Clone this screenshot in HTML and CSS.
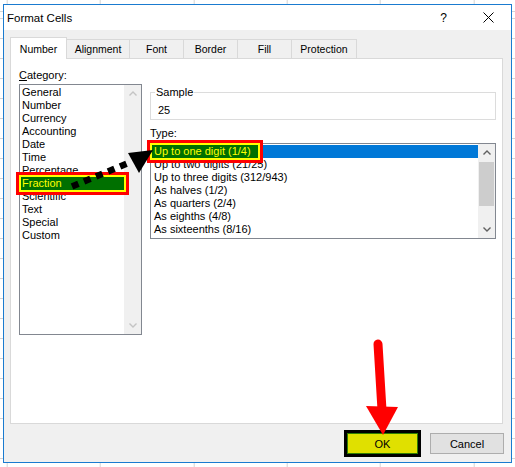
FILE: index.html
```html
<!DOCTYPE html>
<html>
<head>
<meta charset="utf-8">
<title>Format Cells</title>
<link rel="stylesheet" href="styles.css">
</head>
<body>
<div class="dialog">
  <div class="titlebar">
    <span class="title">Format Cells</span>
    <span class="help">?</span>
    <svg class="close" width="11" height="11" viewBox="0 0 11 11"><path d="M0.5 0.5L10.5 10.5M10.5 0.5L0.5 10.5" stroke="#000" stroke-width="1" fill="none"/></svg>
  </div>
  <div class="content">
    <div class="tabs">
      <div class="tab active t-number">Number</div>
      <div class="tab t-align">Alignment</div>
      <div class="tab t-small">Font</div>
      <div class="tab t-small">Border</div>
      <div class="tab t-small">Fill</div>
      <div class="tab t-prot">Protection</div>
    </div>
    <div class="panel">
      <div class="col-left">
        <div class="label cat-label"><u>C</u>ategory:</div>
        <div class="listbox cat">
          <div class="items">
            <div class="row">General</div>
            <div class="row">Number</div>
            <div class="row">Currency</div>
            <div class="row">Accounting</div>
            <div class="row">Date</div>
            <div class="row">Time</div>
            <div class="row">Percentage</div>
            <div class="row hl">Fraction</div>
            <div class="row">Scientific</div>
            <div class="row">Text</div>
            <div class="row">Special</div>
            <div class="row">Custom</div>
          </div>
          <div class="vscroll off">
            <div class="sb-btn"><svg width="8" height="5" viewBox="0 0 8 5"><path d="M0.5 4.5L4 1L7.5 4.5" stroke="currentColor" stroke-width="1.4" fill="none"/></svg></div>
            <div class="sb-track"></div>
            <div class="sb-btn"><svg width="8" height="5" viewBox="0 0 8 5"><path d="M0.5 0.5L4 4L7.5 0.5" stroke="currentColor" stroke-width="1.4" fill="none"/></svg></div>
          </div>
        </div>
      </div>
      <div class="col-right">
        <fieldset class="group">
          <legend>Sample</legend>
          <div class="sample-value">25</div>
        </fieldset>
        <div class="label type-label">Type:</div>
        <div class="listbox type">
          <div class="items">
            <div class="row sel"><span class="txt mark">Up to one digit (1/4)</span></div>
            <div class="row"><span class="txt">Up to two digits (21/25)</span></div>
            <div class="row"><span class="txt">Up to three digits (312/943)</span></div>
            <div class="row"><span class="txt">As halves (1/2)</span></div>
            <div class="row"><span class="txt">As quarters (2/4)</span></div>
            <div class="row"><span class="txt">As eighths (4/8)</span></div>
            <div class="row"><span class="txt">As sixteenths (8/16)</span></div>
          </div>
          <div class="vscroll">
            <div class="sb-btn"><svg width="8" height="5" viewBox="0 0 8 5"><path d="M0.5 4.5L4 1L7.5 4.5" stroke="currentColor" stroke-width="1.4" fill="none"/></svg></div>
            <div class="sb-track"><div class="thumb"></div></div>
            <div class="sb-btn"><svg width="8" height="5" viewBox="0 0 8 5"><path d="M0.5 0.5L4 4L7.5 0.5" stroke="currentColor" stroke-width="1.4" fill="none"/></svg></div>
          </div>
        </div>
      </div>
    </div>
    <div class="buttons">
      <button class="btn ok">OK</button>
      <button class="btn cancel">Cancel</button>
    </div>
  </div>
</div>
<svg class="annotations" width="515" height="467" viewBox="0 0 515 467">
  <line x1="72" y1="186.5" x2="131" y2="162" stroke="#000" stroke-width="6.5" stroke-dasharray="7 6"/>
  <polygon points="153,150 128,153 139,173" fill="#000"/>
  <line x1="378" y1="344" x2="382" y2="410" stroke="#f00" stroke-width="9" stroke-linecap="round"/>
  <polygon points="366,406 398,407 383,435" fill="#f00"/>
</svg>
</body>
</html>
```
FILE: styles.css
```css
html, body {
  margin: 0;
  padding: 0;
}
body {
  width: 515px;
  height: 467px;
  overflow: hidden;
  position: relative;
  font-family: "Liberation Sans", Arial, sans-serif;
  font-size: 11px;
  color: #000;
  background-color: #fff;
  background-image:
    repeating-linear-gradient(90deg, #d4d4d4 0 1px, transparent 1px 93.3px),
    repeating-linear-gradient(180deg, #d4d4d4 0 1px, transparent 1px 20px);
  background-position: 6.7px 0, 0 18px;
}
.dialog {
  margin: 4px 0 0 3px;
  width: 509px;
  height: 459px;
  box-sizing: border-box;
  border: 1px solid #1a7bd0;
  background: #f0f0f0;
  display: flex;
  flex-direction: column;
}
.titlebar {
  height: 25px;
  flex: none;
  background: #fff;
  display: flex;
  align-items: center;
  padding-left: 3px;
}
.title {
  flex: 1;
  font-size: 11.5px;
}
.help {
  font-size: 12px;
  margin-right: 36px;
}
.close {
  margin-right: 17px;
}
.content {
  flex: 1;
  padding: 7px 8px 0 6px;
  display: flex;
  flex-direction: column;
}
.tabs {
  display: flex;
  align-items: flex-end;
  height: 21px;
  position: relative;
  z-index: 1;
}
.tab {
  box-sizing: border-box;
  height: 19px;
  border: 1px solid #d9d9d9;
  border-bottom: none;
  margin-left: -1px;
  display: flex;
  align-items: center;
  justify-content: center;
  font-size: 10.5px;
  background: #f0f0f0;
}
.tab:first-child {
  margin-left: 0;
}
.tab.active {
  height: 22px;
  margin-bottom: -1px;
  background: #fff;
  position: relative;
  z-index: 1;
}
.t-number { width: 57px; }
.t-align { width: 64px; }
.t-small { width: 55px; }
.t-prot { width: 66px; }
.panel {
  height: 366px;
  box-sizing: border-box;
  border: 1px solid #d9d9d9;
  background: #fff;
  display: flex;
  gap: 8px;
  padding: 10px 0 0 8px;
}
.col-left {
  width: 123px;
}
.col-right {
  width: 346px;
}
.label {
  height: 13px;
  line-height: 13px;
}
.cat-label {
  margin-bottom: 2px;
}
.listbox {
  box-sizing: border-box;
  border: 1px solid #828790;
  background: #fff;
  display: flex;
}
.cat {
  height: 251px;
}
.type {
  height: 96px;
}
.items {
  flex: 1;
  min-width: 0;
  padding: 1px 0 0 1px;
}
.row {
  height: 13px;
  line-height: 13px;
  white-space: nowrap;
}
.cat .row {
  padding-left: 1px;
}
.row.hl {
  background: #007000;
  color: #ff0;
  box-shadow: 0 0 0 2px #ff0, 0 0 0 5px #f00;
  position: relative;
  z-index: 1;
}
.txt {
  display: inline-block;
  padding: 0 2px;
  height: 13px;
}
.row.sel {
  background: #0078d7;
  color: #fff;
}
.mark {
  background: #007000;
  color: #ff0;
  padding: 0 7px 0 2px;
  box-shadow: 0 0 0 2px #ff0, 0 0 0 5px #f00;
  position: relative;
  z-index: 1;
}
.vscroll {
  width: 17px;
  flex: none;
  background: #f0f0f0;
  display: flex;
  flex-direction: column;
  color: #606060;
}
.vscroll.off {
  color: #c4c4c4;
}
.sb-btn {
  height: 17px;
  display: flex;
  align-items: center;
  justify-content: center;
}
.sb-track {
  flex: 1;
}
.thumb {
  margin: 1px 1px 0;
  height: 44px;
  background: #cdcdcd;
}
.group {
  margin: 17px 0 0;
  padding: 5px 0 2px 4px;
  border: 1px solid #dcdcdc;
  min-width: 0;
}
.group legend {
  padding: 0 1px;
  line-height: 13px;
}
.sample-value {
  line-height: 13px;
  padding-left: 3px;
}
.type-label {
  margin: 7px 0 3px;
}
.buttons {
  display: flex;
  justify-content: flex-end;
  align-items: center;
  gap: 9px;
  height: 27px;
  margin: 6px -1px 0 0;
}
.btn {
  font-family: inherit;
  font-size: 11px;
  color: #000;
  box-sizing: border-box;
  padding: 0;
}
.ok {
  width: 77px;
  height: 27px;
  border: 3px solid #000;
  background: #e0e000;
  box-shadow: inset 0 0 0 1px #2e7d00;
}
.cancel {
  width: 74px;
  height: 21px;
  border: 1px solid #adadad;
  background: #e1e1e1;
}
.annotations {
  position: absolute;
  left: 0;
  top: 0;
  z-index: 5;
  pointer-events: none;
}
```
